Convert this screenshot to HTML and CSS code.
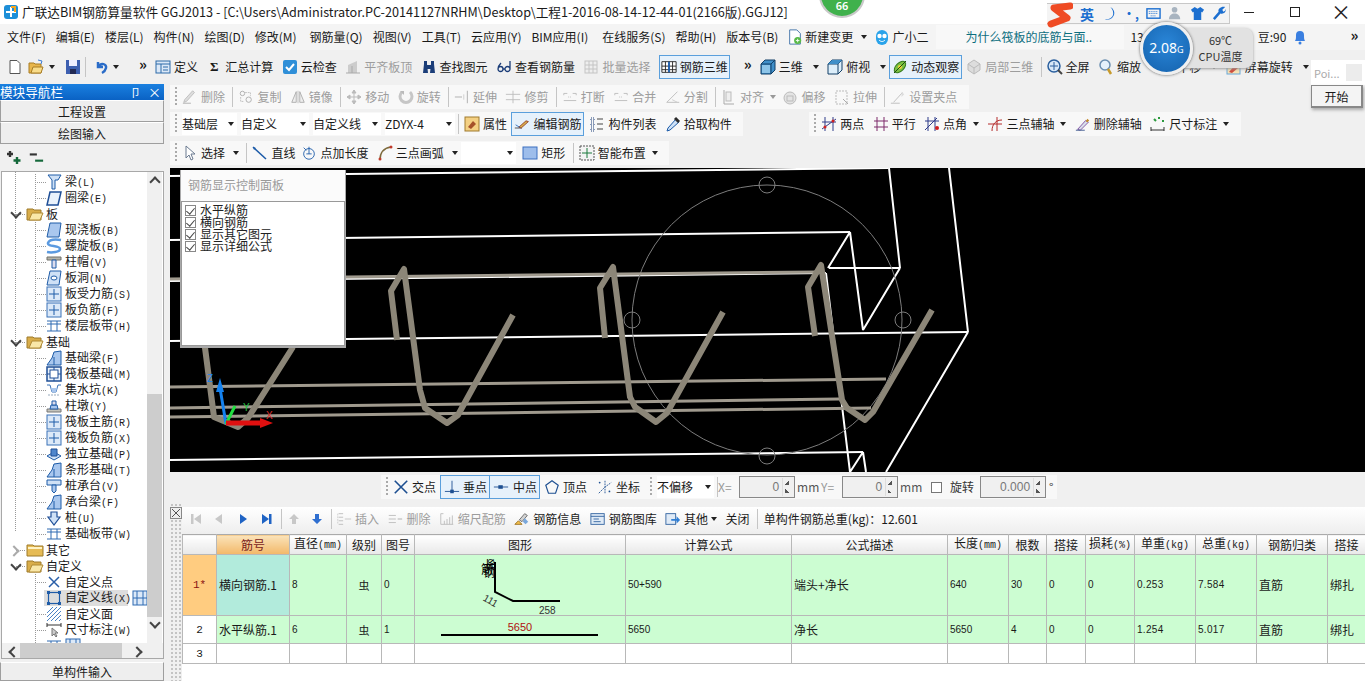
FILE: index.html
```html
<!DOCTYPE html>
<html lang="zh">
<head>
<meta charset="utf-8">
<title>广联达BIM钢筋算量软件 GGJ2013</title>
<link rel="stylesheet" href="styles.css">
</head>
<body>
<svg class="sprite" width="0" height="0">
<defs>
<symbol id="logo" viewBox="0 0 16 16"><rect x="1" y="1" width="14" height="14" rx="3" fill="#1d8fd8"/><path d="M8 3v10M3 8h10" stroke="#fff" stroke-width="2"/><path d="M8 3h4v5" fill="none" stroke="#f5a623" stroke-width="2"/></symbol>
<symbol id="new" viewBox="0 0 16 16"><path d="M3 1.500h7l3 3v10H3z" fill="#fff" stroke="#555"/></symbol>
<symbol id="open" viewBox="0 0 16 16"><path d="M1 4h5l1 1h6v9H1z" fill="#e8b64c" stroke="#a87d25"/><path d="M3 14l2-6h10l-2 6z" fill="#f8dc8a" stroke="#a87d25"/><path d="M10 1l4 1-1 3" fill="none" stroke="#3a7bd5"/></symbol>
<symbol id="save" viewBox="0 0 16 16"><rect x="1" y="1" width="14" height="14" fill="#3d5fb0"/><rect x="4" y="1" width="8" height="6" fill="#eef"/><rect x="5" y="10" width="6" height="5" fill="#222a55"/></symbol>
<symbol id="undo" viewBox="0 0 16 16"><path d="M4 3v5h5M4 8c3-5 9-3 8 1-.5 2-2 4-4 5" fill="none" stroke="#2a6cc8" stroke-width="2.500"/></symbol>
<symbol id="def" viewBox="0 0 16 16"><rect x="1" y="2" width="14" height="12" fill="#dbe8f7" stroke="#2c6aa8"/><path d="M1 5h14M6 5v9M8 8h5M8 11h5" stroke="#2c6aa8"/></symbol>
<symbol id="cloud" viewBox="0 0 16 16"><rect x="1" y="1" width="14" height="14" rx="2" fill="#2f8fd8"/><path d="M4 8l3 3 5-6" fill="none" stroke="#fff" stroke-width="2"/></symbol>
<symbol id="flat" viewBox="0 0 16 16"><path d="M3 14V6l9-4v12z" fill="#ccc"/><path d="M1 14h14M7 7v7" stroke="#aaa"/></symbol>
<symbol id="binoc" viewBox="0 0 16 16"><path d="M2 14l1-9h3l1 9zM9 14l1-9h3l1 9zM6 6h4v4H6zM3 2h3v3H3zM10 2h3v3h-3z" fill="#1b3d78"/></symbol>
<symbol id="glass" viewBox="0 0 16 16"><path d="M2 10c0-3 2-5 3-6M2 10a2.500 2.500 0 1 0 5 0 2.500 2.500 0 1 0-5 0M9 10a2.500 2.500 0 1 0 5 0 2.500 2.500 0 1 0-5 0M14 10V2M7 10h2" fill="none" stroke="#1b3d78" stroke-width="1.300"/></symbol>
<symbol id="batch" viewBox="0 0 16 16"><rect x="2" y="2" width="12" height="12" fill="#eee" stroke="#c4c4c4"/><path d="M2 6h12M2 10h12M6 2v12M10 2v12" stroke="#c4c4c4"/></symbol>
<symbol id="g3d" viewBox="0 0 18 16"><path d="M1 2h16v12H1zM5 2v12M9 2v12M13 2v12M1 7h16M1 11h16" fill="#fff" stroke="#222"/><path d="M9 2v12" stroke="#1a5fb4" stroke-width="2"/></symbol>
<symbol id="cube" viewBox="0 0 16 16"><path d="M1 5l4-4h10v10l-4 4H1z" fill="#3f8fc9" stroke="#123f66"/><path d="M1 5h10v10M11 5l4-4" fill="none" stroke="#123f66"/><path d="M2 6h8v8H2z" fill="#8cc4e8"/></symbol>
<symbol id="cube2" viewBox="0 0 16 16"><path d="M1 5l4-4h10v10l-4 4H1z" fill="#dceefa" stroke="#123f66"/><path d="M1 5h10v10M11 5l4-4" fill="none" stroke="#123f66"/><path d="M1 5l4-4h10l-4 4z" fill="#3f8fc9"/></symbol>
<symbol id="orbit" viewBox="0 0 16 16"><ellipse cx="8" cy="8" rx="7" ry="4" fill="#7cc242" stroke="#357a1c" transform="rotate(-45 8 8)"/><circle cx="8" cy="8" r="2" fill="#f2d13c"/><path d="M2 14L14 2" stroke="#1e4d12"/></symbol>
<symbol id="gcube" viewBox="0 0 16 16"><path d="M8 1l6 4v6l-6 4-6-4V5z" fill="#ddd" stroke="#bbb"/><path d="M2 5l6 4 6-4M8 9v6" stroke="#bbb" fill="none"/></symbol>
<symbol id="full" viewBox="0 0 16 16"><circle cx="7" cy="7" r="6" fill="#d8e8f8" stroke="#2a5f9e" stroke-width="1.500"/><path d="M7 3v8M3 7h8" stroke="#2a5f9e"/><path d="M11 11l4 4" stroke="#444" stroke-width="2"/></symbol>
<symbol id="zoomi" viewBox="0 0 16 16"><circle cx="7" cy="6" r="5" fill="#e6f2fb" stroke="#6b8fb0" stroke-width="1.500"/><path d="M10 10l3 5" stroke="#c79a2c" stroke-width="2.500"/></symbol>
<symbol id="rot" viewBox="0 0 16 16"><rect x="1" y="3" width="13" height="12" fill="#f7e2b4" stroke="#69a7d8"/><path d="M3 13l6-7 3 3-6 5z" fill="#d04a3a"/></symbol>
<symbol id="note" viewBox="0 0 16 18"><path d="M2 1h8l4 4v12H2z" fill="#fff" stroke="#3a6ea5"/><circle cx="11" cy="13" r="4" fill="#58b948"/><path d="M9 13h4M11 11v4" stroke="#fff"/></symbol>
<symbol id="bot" viewBox="0 0 16 16"><path d="M2 7a6 6 0 0 1 12 0v3a6 6 0 0 1-12 0z" fill="#29a3ea"/><circle cx="5.500" cy="7" r="2.200" fill="#fff"/><circle cx="10.500" cy="7" r="2.200" fill="#fff"/><path d="M5 11c2 2 4 2 6 0" stroke="#fff" fill="none"/></symbol>
<symbol id="bell" viewBox="0 0 16 16"><path d="M3 12c1-2 1-3 1-6a4 4 0 0 1 8 0c0 3 0 4 1 6z" fill="#3a7fe0"/><circle cx="8" cy="14" r="1.500" fill="#3a7fe0"/></symbol>
<symbol id="del" viewBox="0 0 18 16"><path d="M2 14l3-1 9-10-2-2-9 10z" fill="#ddd" stroke="#bbb"/><path d="M1 15h9" stroke="#aaa"/></symbol>
<symbol id="copy" viewBox="0 0 18 16"><circle cx="5" cy="4" r="2.500" fill="none" stroke="#aaa"/><circle cx="12" cy="11" r="3" fill="none" stroke="#aaa"/><path d="M8 3h6M14 3v4M3 8v5h4" fill="none" stroke="#bbb" stroke-dasharray="2 1"/></symbol>
<symbol id="mirror" viewBox="0 0 18 16"><path d="M2 14L7 2v12zM16 14L11 2v12z" fill="#eee" stroke="#aaa"/><path d="M9 1v14" stroke="#bbb"/></symbol>
<symbol id="move" viewBox="0 0 16 16"><path d="M8 1v14M1 8h14M8 1l-2 3h4zM8 15l-2-3h4zM1 8l3-2v4zM15 8l-3-2v4z" fill="#bbb" stroke="#bbb"/></symbol>
<symbol id="rotg" viewBox="0 0 16 16"><path d="M4 3a6 6 0 1 0 8 0" fill="none" stroke="#c6c6c6" stroke-width="3"/><path d="M2 2h4v4" fill="#bbb"/></symbol>
<symbol id="ext" viewBox="0 0 18 16"><path d="M15 1v14M1 8h8" stroke="#aaa"/><path d="M11 5v6" stroke="#ccc"/></symbol>
<symbol id="trim" viewBox="0 0 18 16"><path d="M9 1v14M1 5h16M1 11h16" stroke="#bbb"/></symbol>
<symbol id="brk" viewBox="0 0 18 16"><path d="M2 4h4M12 4h4M2 12h14M2 4v2M16 4v2" stroke="#bbb" fill="none"/><path d="M7 8h4" stroke="#bbb" stroke-dasharray="1 1"/></symbol>
<symbol id="cut" viewBox="0 0 18 16"><path d="M2 14L14 2M2 14h14" stroke="#bbb" fill="none"/><path d="M8 11l6 3" stroke="#ccc"/></symbol>
<symbol id="align" viewBox="0 0 16 16"><path d="M3 1v14h10" stroke="#aaa" fill="none"/><rect x="5" y="3" width="5" height="9" fill="#eee" stroke="#bbb"/></symbol>
<symbol id="off" viewBox="0 0 16 16"><circle cx="8" cy="9" r="6" fill="#e4e4e4" stroke="#bbb"/><rect x="5" y="7" width="6" height="5" fill="none" stroke="#bbb"/></symbol>
<symbol id="str" viewBox="0 0 16 16"><rect x="2" y="2" width="11" height="13" fill="none" stroke="#bbb" stroke-dasharray="2 1"/><path d="M9 10l5 5" stroke="#aaa"/></symbol>
<symbol id="gripi" viewBox="0 0 18 16"><path d="M4 14L14 3M1 15h10" stroke="#bbb"/><path d="M13 2l3 3-3 3" fill="#ddd"/></symbol>
<symbol id="prop" viewBox="0 0 16 16"><rect x="1" y="1" width="14" height="14" fill="#f4d083" stroke="#9f7a2c"/><path d="M4 11l5-6 3 3-5 5z" fill="#a5512a"/></symbol>
<symbol id="edit" viewBox="0 0 20 16"><path d="M1 13h9" stroke="#333"/><path d="M6 12l9-8 3 1-9 8z" fill="#d8b04c" stroke="#8a2e1c"/><path d="M2 9l5 3" stroke="#1b60b5"/></symbol>
<symbol id="list" viewBox="0 0 16 16"><path d="M2 2h3v3H2zM2 7h3v3H2zM2 12h3v3H2z" fill="none" stroke="#1b3d78" stroke-dasharray="1 1"/><path d="M8 3h6M8 8h6M8 13h6" stroke="#444"/></symbol>
<symbol id="pick" viewBox="0 0 16 16"><path d="M2 15l1-3 8-9 3 3-9 8z" fill="#cfe2f7" stroke="#1b5aa8"/><path d="M10 2l4 4" stroke="#2b2b2b" stroke-width="3"/></symbol>
<symbol id="two" viewBox="0 0 16 16"><path d="M4 1v14M12 1v14M1 6h14M1 13L15 3" stroke="#2f3c8a"/><circle cx="4" cy="11" r="1.500" fill="#d02020"/><circle cx="12" cy="5" r="1.500" fill="#d02020"/></symbol>
<symbol id="par" viewBox="0 0 16 16"><path d="M4 1v14M11 1v14M1 5h14M1 11h14" stroke="#7d2a6a"/></symbol>
<symbol id="ang" viewBox="0 0 16 16"><path d="M4 1v14M11 1v14M1 5h14M1 14L13 2" stroke="#2f3c8a"/><circle cx="13" cy="12" r="2" fill="#d02020"/></symbol>
<symbol id="arcx" viewBox="0 0 16 16"><path d="M5 15c0-7 4-11 10-11M1 8h14M10 1v14" fill="none" stroke="#b42a2a"/></symbol>
<symbol id="delx" viewBox="0 0 18 16"><path d="M3 14l9-10 3 2-9 9z" fill="#d8dfea" stroke="#7b4a9e"/><path d="M12 5l2-3 2 2-2 2" fill="#c08a2c"/><path d="M1 15h10" stroke="#36528a"/></symbol>
<symbol id="dim" viewBox="0 0 16 16"><path d="M1 11v4M14 11v4M1 14h13" stroke="#333"/><path d="M4 3l2 2M8 2h2M13 4v2" stroke="#2c9a3e" stroke-width="2"/></symbol>
<symbol id="cur" viewBox="0 0 16 16"><path d="M4 1v12l3-3 2 5 2-1-2-5h4z" fill="#fff" stroke="#6b7a90"/></symbol>
<symbol id="lin" viewBox="0 0 16 16"><path d="M1 2l13 12" stroke="#1b5aa8" stroke-width="1.500"/><path d="M1 2l3 1-2 2z" fill="#1b5aa8"/></symbol>
<symbol id="ptl" viewBox="0 0 18 16"><circle cx="9" cy="9" r="6" fill="none" stroke="#1b5aa8"/><path d="M9 1v8M6 9h6M3 2l3 3" stroke="#1b5aa8"/></symbol>
<symbol id="arc" viewBox="0 0 16 16"><path d="M3 15C3 7 7 3 14 2" fill="none" stroke="#7d6a3c" stroke-width="1.500"/><circle cx="3" cy="14" r="1.500" fill="#c03a2a"/><circle cx="14" cy="2" r="1.500" fill="#c03a2a"/></symbol>
<symbol id="rect" viewBox="0 0 16 16"><rect x="1" y="2" width="14" height="12" fill="#9dbdeb" stroke="#3a6ec0"/></symbol>
<symbol id="smart" viewBox="0 0 16 16"><rect x="1" y="1" width="14" height="14" fill="#f4f4f4" stroke="#555" stroke-dasharray="2 1"/><path d="M8 3v10M3 8h10" stroke="#1b7a3c"/></symbol>
<symbol id="snx" viewBox="0 0 18 18"><path d="M2 2l14 14M16 2L2 16" stroke="#1d4f91" stroke-width="1.800"/></symbol>
<symbol id="snp" viewBox="0 0 18 18"><path d="M9 2v12M1 14h16" stroke="#1d4f91"/><rect x="7" y="12" width="4" height="4" fill="#1d4f91"/></symbol>
<symbol id="snm" viewBox="0 0 18 18"><path d="M1 9h16" stroke="#1d4f91"/><rect x="6" y="7" width="5" height="4" fill="#1d4f91"/></symbol>
<symbol id="snv" viewBox="0 0 18 18"><path d="M9 2l7 5-3 9H5L2 7z" fill="none" stroke="#1d4f91" stroke-width="1.300"/></symbol>
<symbol id="sno" viewBox="0 0 18 18"><path d="M9 2v14M2 16L9 9l7-5" stroke="#1d4f91" stroke-dasharray="2 1" fill="none"/><circle cx="3" cy="4" r="1" fill="#1d4f91"/><circle cx="14" cy="14" r="1" fill="#1d4f91"/></symbol>
<symbol id="tri" viewBox="0 0 16 16"><path d="M5 3l7 5-7 5z" fill="#1f63c4"/></symbol>
<symbol id="triend" viewBox="0 0 16 16"><path d="M3 3l7 5-7 5z" fill="#1f63c4"/><rect x="10" y="3" width="2.500" height="10" fill="#1f63c4"/></symbol>
<symbol id="gstart" viewBox="0 0 16 16"><rect x="3" y="3" width="2.500" height="10" fill="#c8c8c8"/><path d="M13 3L6 8l7 5z" fill="#c8c8c8"/></symbol>
<symbol id="gprev" viewBox="0 0 16 16"><path d="M11 3L4 8l7 5z" fill="#c8c8c8"/></symbol>
<symbol id="gup" viewBox="0 0 16 16"><path d="M8 3l5 5H10v5H6V8H3z" fill="#c8c8c8"/></symbol>
<symbol id="bdown" viewBox="0 0 16 16"><path d="M8 13L3 8h3V3h4v5h3z" fill="#2f6fd0"/></symbol>
<symbol id="ins" viewBox="0 0 18 16"><path d="M3 2h5M3 6h5M3 10h5M3 14h5" stroke="#bbb"/><path d="M10 8h7" stroke="#c4c4c4"/><path d="M2 2v12" stroke="#ccc" stroke-dasharray="2 1"/></symbol>
<symbol id="rdel" viewBox="0 0 18 16"><path d="M2 4h8M2 8h8M2 12h8" stroke="#bbb"/><path d="M12 8h5" stroke="#aaa"/></symbol>
<symbol id="scale" viewBox="0 0 18 16"><path d="M2 14V2h3M6 14v-4M9 14v-6M12 14v-8M15 14V4M2 14h14" stroke="#bbb" fill="none"/></symbol>
<symbol id="info" viewBox="0 0 18 16"><path d="M1 14l4-4 4 4z" fill="#f4c14e" stroke="#9c6f1c"/><path d="M6 9l6-7 3 2-6 7z" fill="#d2d2d2" stroke="#666"/><path d="M12 7l4 4-3 3-3-3z" fill="#7aa8dc"/></symbol>
<symbol id="lib" viewBox="0 0 18 16"><rect x="1" y="2" width="15" height="12" fill="#dfeaf6" stroke="#30629f"/><path d="M1 5h15M4 8h6M4 11h8" stroke="#30629f"/></symbol>
<symbol id="oth" viewBox="0 0 18 16"><rect x="1" y="2" width="11" height="12" fill="#dfeaf6" stroke="#30629f"/><path d="M7 8h6V5l4 4-4 4v-3H7z" fill="#2f7fd6"/></symbol>
<symbol id="folder" viewBox="0 0 18 14"><path d="M1 2h6l1 1h9v10H1z" fill="#e6bb55" stroke="#9e7a2a"/><path d="M2 4h14v2H2z" fill="#fff3c4"/></symbol>
<symbol id="folderopen" viewBox="0 0 18 14"><path d="M1 2h6l1 1h7v10H1z" fill="#d9ad4a" stroke="#9e7a2a"/><path d="M3 13l3-7h11l-3 7z" fill="#f9e7a8" stroke="#b08a35"/></symbol>
<symbol id="expand" viewBox="0 0 16 16"><path d="M4 1v6M1 4h6" stroke="#333" stroke-width="2.400"/><path d="M11 7v7M7.500 10.500h7" stroke="#14683a" stroke-width="2.400"/></symbol>
<symbol id="collapse" viewBox="0 0 18 16"><path d="M2 4h8" stroke="#333" stroke-width="2.400"/><path d="M8 11h9" stroke="#14683a" stroke-width="2.400"/></symbol>
<symbol id="t-beam" viewBox="0 0 16 16"><path d="M2 1h13l-3 5H9v9H6V6z" fill="#cfe1f6" stroke="#1f5ca8"/></symbol>
<symbol id="t-ring" viewBox="0 0 16 16"><path d="M4 2h11l-3 13H1z" fill="#eaf2fb" stroke="#1f4f97" stroke-width="1.500"/></symbol>
<symbol id="t-slab" viewBox="0 0 16 16"><path d="M4 1h11l-2 14H1z" fill="#a9c7ee" stroke="#1f5ca8"/></symbol>
<symbol id="t-spiral" viewBox="0 0 16 16"><path d="M15 2C8 1 3 2 2 5c-1 4 12 2 12 6 0 3-8 4-13 3" fill="none" stroke="#5b9ae0" stroke-width="2.500"/></symbol>
<symbol id="t-cap" viewBox="0 0 16 16"><path d="M1 3h14v3H1z" fill="#b4b4aa" stroke="#70706a"/><path d="M6 6h4v8H6z" fill="#dde" stroke="#1f5ca8"/></symbol>
<symbol id="t-hole" viewBox="0 0 16 16"><path d="M4 1h11l-2 14H1z" fill="#cfe1f6" stroke="#1f5ca8"/><ellipse cx="8" cy="8" rx="3" ry="2" fill="#fff" stroke="#1f5ca8"/></symbol>
<symbol id="t-bar" viewBox="0 0 16 16"><rect x="1" y="1" width="14" height="14" fill="#dce9f8" stroke="#3a72b8"/><path d="M8 3v10M3 8h10" stroke="#1f5ca8"/></symbol>
<symbol id="t-band" viewBox="0 0 16 16"><path d="M1 3h14M1 13h14M5 3v10M11 3v10M1 6h14" stroke="#2f6bb2"/></symbol>
<symbol id="t-fb" viewBox="0 0 16 16"><path d="M1 15l5-7 2-6 7-1v14z" fill="#a9c7ee" stroke="#1f5ca8"/><path d="M8 7v8" stroke="#1f5ca8"/></symbol>
<symbol id="t-raft" viewBox="0 0 16 16"><rect x="1" y="1" width="14" height="14" fill="#eaf2fb" stroke="#1f4f97" stroke-width="1.500"/><rect x="4" y="4" width="8" height="8" fill="#fff" stroke="#1f4f97"/><path d="M1 8h3M12 8h3M8 1v3M8 12v3" stroke="#1f4f97"/></symbol>
<symbol id="t-pit" viewBox="0 0 16 16"><path d="M1 3h3l2 7h4l2-7h3" fill="none" stroke="#3a72b8"/><path d="M5 6h6l-1 4H6z" fill="#a9c7ee"/><path d="M2 13h12" stroke="#9ab" stroke-dasharray="2 1"/></symbol>
<symbol id="t-pier" viewBox="0 0 16 16"><path d="M1 11h14v3H1z" fill="#c4c4bc" stroke="#777"/><path d="M5 7h6l1 4H4z" fill="#a9c7ee" stroke="#1f5ca8"/><path d="M6 3h4v4H6z" fill="#dde" stroke="#1f5ca8"/></symbol>
<symbol id="t-ind" viewBox="0 0 16 16"><path d="M1 10l7-4 7 4-7 4z" fill="#cfe1f6" stroke="#1f5ca8"/><path d="M5 3h6v7H5z" fill="#4f86cc" stroke="#1f4f97"/></symbol>
<symbol id="t-pcap" viewBox="0 0 16 16"><path d="M1 2h14v5H1z" fill="#cfe1f6" stroke="#1f5ca8"/><path d="M6 7h4v6l-2 2-2-2z" fill="#a9c7ee" stroke="#1f5ca8"/></symbol>
<symbol id="t-pile" viewBox="0 0 16 16"><path d="M5 2h6v5h3l-6 8-6-8h3z" fill="#cfe1f6" stroke="#1f4f97" stroke-width="1.200"/></symbol>
<symbol id="t-x" viewBox="0 0 16 16"><path d="M3 3l10 10M13 3L3 13" stroke="#2a5fa8" stroke-width="1.500"/></symbol>
<symbol id="t-line" viewBox="0 0 16 16"><rect x="2.500" y="2.500" width="11" height="11" fill="none" stroke="#1f5ca8" stroke-width="1.200"/><path d="M1 1h3v3H1zM12 1h3v3h-3zM1 12h3v3H1zM12 12h3v3h-3z" fill="#1f5ca8"/></symbol>
<symbol id="t-face" viewBox="0 0 16 16"><path d="M1 7l6-6M1 11L11 1M1 15L15 1M5 15L15 5M9 15l6-6M13 15l2-2" stroke="#4a82c4"/></symbol>
<symbol id="t-dim" viewBox="0 0 16 16"><path d="M1 1v4M15 1v4M1 3h14" stroke="#333"/><path d="M6 6v8l2-2 2 3 1-1-2-3h3z" fill="#ccc" stroke="#777"/></symbol>
<symbol id="t-col" viewBox="0 0 16 16"><rect x="1" y="1" width="14" height="14" fill="#dce9f8" stroke="#2f6bb2"/><path d="M5 1v14M11 1v14M1 8h14" stroke="#2f6bb2"/></symbol>
<symbol id="gx" viewBox="0 0 12 12"><rect x=".5" y=".5" width="11" height="11" fill="#eee" stroke="#888"/><path d="M2 2l8 8M10 2l-8 8" stroke="#555"/></symbol>
<symbol id="sogou" viewBox="0 0 26 28"><path d="M23 5L7 7 20 17 4 23" fill="none" stroke="#ef4b24" stroke-width="7" stroke-linejoin="round" stroke-linecap="round"/></symbol>
<symbol id="moon" viewBox="0 0 16 16"><path d="M10 1a7 7 0 0 1-6 13c5 1 9-2 9-6 0-3-1-5-3-7z" fill="#1c6fd0"/></symbol>
<symbol id="kbd" viewBox="0 0 16 16"><rect x="1" y="3" width="14" height="10" fill="none" stroke="#1c6fd0" stroke-width="1.500"/><path d="M3 6h10M3 8h10M5 10.500h6" stroke="#1c6fd0" stroke-dasharray="1 1"/></symbol>
<symbol id="user" viewBox="0 0 16 16"><circle cx="7" cy="4" r="3" fill="#a8b4c0"/><path d="M1 14c0-4 3-6 6-6s6 2 6 6z" fill="#a8b4c0"/></symbol>
<symbol id="shirt" viewBox="0 0 16 16"><path d="M5 1L1 4l2 3 1-1v9h8V6l1 1 2-3-4-3-3 2z" fill="#1c6fd0"/></symbol>
<symbol id="wrench" viewBox="0 0 16 16"><path d="M14 1l-3 3 1 2 2-1 1-2c0 4-3 6-6 5l-6 7-2-2 6-7c-1-3 3-6 7-5z" fill="#1c6fd0"/></symbol>
</defs>
</svg>

<div class="app">
  <header class="titlebar">
    <svg class="ic logo"><use href="#logo"/></svg>
    <span class="title">广联达BIM钢筋算量软件 GGJ2013 - [C:\Users\Administrator.PC-20141127NRHM\Desktop\工程1-2016-08-14-12-44-01(2166版).GGJ12]</span>
    <div class="winctl">
      <span class="wmin"></span><span class="wres"></span><span class="wcls">×</span>
    </div>
  </header>

  <nav class="menubar">
    <span>文件(F)</span><span>编辑(E)</span><span>楼层(L)</span><span>构件(N)</span><span>绘图(D)</span><span>修改(M)</span><span class="m3">钢筋量(Q)</span><span>视图(V)</span><span>工具(T)</span><span>云应用(Y)</span><span>BIM应用(I)</span><span class="m5">在线服务(S)</span><span>帮助(H)</span><span>版本号(B)</span>
    <span class="mi mi1"><svg class="ic"><use href="#note"/></svg>新建变更<b class="ar"></b></span>
    <span class="mi mi2"><svg class="ic"><use href="#bot"/></svg>广小二</span>
    <span class="ask">为什么筏板的底筋与面..</span>
    <span class="tail">13</span>
    <span class="bean">豆:90</span>
    <svg class="ic bell"><use href="#bell"/></svg>
    <span class="more">»</span>
  </nav>

  <div class="tb tb1">
    <svg class="ic"><use href="#new"/></svg>
    <svg class="ic ml5"><use href="#open"/></svg><b class="ar a1"></b>
    <svg class="ic"><use href="#save"/></svg>
    <i class="sp sp1"></i>
    <svg class="ic"><use href="#undo"/></svg><b class="ar a3"></b>
    <span class="chev">»</span>
    <span class="it"><svg class="ic"><use href="#def"/></svg>定义</span>
    <span class="it"><span class="sigma">Σ</span>汇总计算</span>
    <span class="it"><svg class="ic"><use href="#cloud"/></svg>云检查</span>
    <span class="it off"><svg class="ic"><use href="#flat"/></svg>平齐板顶</span>
    <span class="it"><svg class="ic"><use href="#binoc"/></svg>查找图元</span>
    <span class="it"><svg class="ic"><use href="#glass"/></svg>查看钢筋量</span>
    <span class="it off"><svg class="ic"><use href="#batch"/></svg>批量选择</span>
    <span class="it box b3d"><svg class="ic"><use href="#g3d"/></svg>钢筋三维</span>
    <span class="chev chev2">»</span>
    <span class="it"><svg class="ic"><use href="#cube"/></svg>三维<b class="ar a2"></b></span>
    <span class="it mr3"><svg class="ic"><use href="#cube2"/></svg>俯视<b class="ar a2"></b></span>
    <span class="it box orb"><svg class="ic"><use href="#orbit"/></svg>动态观察</span>
    <span class="it off"><svg class="ic"><use href="#gcube"/></svg>局部三维</span>
    <i class="sp"></i>
    <span class="it"><svg class="ic"><use href="#full"/></svg>全屏</span>
    <span class="it"><svg class="ic"><use href="#zoomi"/></svg>缩放<b class="ar a2"></b></span>
    <span class="it pan">平移<b class="ar a2"></b></span>
    <span class="it"><svg class="ic"><use href="#rot"/></svg>屏幕旋转<b class="ar a2"></b></span>
  </div>

  <div class="work">
    <aside class="side">
      <div class="sidehead"><span>模块导航栏</span><span class="pin">卩</span><span class="cl">×</span></div>
      <div class="sbtn">工程设置</div>
      <div class="sbtn">绘图输入</div>
      <div class="treetools"><svg class="ic"><use href="#expand"/></svg><svg class="ic"><use href="#collapse"/></svg></div>
      <div class="treepane">
        <div class="treemain">
          <div class="tree">
            <div class="tr ch"><svg class="ic"><use href="#t-beam"/></svg><span>梁<i>(L)</i></span></div>
            <div class="tr ch"><svg class="ic"><use href="#t-ring"/></svg><span>圈梁<i>(E)</i></span></div>
            <div class="tr fd"><span class="exp"></span><svg class="fo"><use href="#folderopen"/></svg><span>板</span></div>
            <div class="tr ch"><svg class="ic"><use href="#t-slab"/></svg><span>现浇板<i>(B)</i></span></div>
            <div class="tr ch"><svg class="ic"><use href="#t-spiral"/></svg><span>螺旋板<i>(B)</i></span></div>
            <div class="tr ch"><svg class="ic"><use href="#t-cap"/></svg><span>柱帽<i>(V)</i></span></div>
            <div class="tr ch"><svg class="ic"><use href="#t-hole"/></svg><span>板洞<i>(N)</i></span></div>
            <div class="tr ch"><svg class="ic"><use href="#t-bar"/></svg><span>板受力筋<i>(S)</i></span></div>
            <div class="tr ch"><svg class="ic"><use href="#t-bar"/></svg><span>板负筋<i>(F)</i></span></div>
            <div class="tr ch"><svg class="ic"><use href="#t-band"/></svg><span>楼层板带<i>(H)</i></span></div>
            <div class="tr fd"><span class="exp"></span><svg class="fo"><use href="#folderopen"/></svg><span>基础</span></div>
            <div class="tr ch"><svg class="ic"><use href="#t-fb"/></svg><span>基础梁<i>(F)</i></span></div>
            <div class="tr ch"><svg class="ic"><use href="#t-raft"/></svg><span>筏板基础<i>(M)</i></span></div>
            <div class="tr ch"><svg class="ic"><use href="#t-pit"/></svg><span>集水坑<i>(K)</i></span></div>
            <div class="tr ch"><svg class="ic"><use href="#t-pier"/></svg><span>柱墩<i>(Y)</i></span></div>
            <div class="tr ch"><svg class="ic"><use href="#t-bar"/></svg><span>筏板主筋<i>(R)</i></span></div>
            <div class="tr ch"><svg class="ic"><use href="#t-bar"/></svg><span>筏板负筋<i>(X)</i></span></div>
            <div class="tr ch"><svg class="ic"><use href="#t-ind"/></svg><span>独立基础<i>(P)</i></span></div>
            <div class="tr ch"><svg class="ic"><use href="#t-fb"/></svg><span>条形基础<i>(T)</i></span></div>
            <div class="tr ch"><svg class="ic"><use href="#t-pcap"/></svg><span>桩承台<i>(V)</i></span></div>
            <div class="tr ch"><svg class="ic"><use href="#t-fb"/></svg><span>承台梁<i>(F)</i></span></div>
            <div class="tr ch"><svg class="ic"><use href="#t-pile"/></svg><span>桩<i>(U)</i></span></div>
            <div class="tr ch"><svg class="ic"><use href="#t-band"/></svg><span>基础板带<i>(W)</i></span></div>
            <div class="tr fd"><span class="exp rt"></span><svg class="fo"><use href="#folder"/></svg><span>其它</span></div>
            <div class="tr fd"><span class="exp"></span><svg class="fo"><use href="#folderopen"/></svg><span>自定义</span></div>
            <div class="tr ch"><svg class="ic"><use href="#t-x"/></svg><span>自定义点</span></div>
            <div class="tr ch chosen"><svg class="ic"><use href="#t-line"/></svg><span>自定义线<i>(X)</i></span><svg class="ic cols"><use href="#t-col"/></svg></div>
            <div class="tr ch"><svg class="ic"><use href="#t-face"/></svg><span>自定义面</span></div>
            <div class="tr ch"><svg class="ic"><use href="#t-dim"/></svg><span>尺寸标注<i>(W)</i></span></div>
            <div class="tr ch"><svg class="ic"><use href="#t-band"/></svg><svg class="ic"><use href="#t-col"/></svg></div>
          </div>
          <div class="vscroll"><span class="up"></span><span class="thumb"></span><span class="dn"></span></div>
        </div>
        <div class="hscroll"><span class="lf"></span><span class="hthumb"></span><span class="rg"></span></div>
      </div>
      <div class="sbtn last">单构件输入</div>
    </aside>

    <main class="main">
      <div class="row r2">
        <div class="tbar off">
          <i class="gr"></i>
          <span class="it"><svg class="ic"><use href="#del"/></svg>删除</span><i class="sp"></i>
          <span class="it"><svg class="ic"><use href="#copy"/></svg>复制</span>
          <span class="it"><svg class="ic"><use href="#mirror"/></svg>镜像</span><i class="sp"></i>
          <span class="it"><svg class="ic"><use href="#move"/></svg>移动</span>
          <span class="it"><svg class="ic"><use href="#rotg"/></svg>旋转</span><i class="sp"></i>
          <span class="it"><svg class="ic"><use href="#ext"/></svg>延伸</span>
          <span class="it"><svg class="ic"><use href="#trim"/></svg>修剪</span><i class="sp"></i>
          <span class="it"><svg class="ic"><use href="#brk"/></svg>打断</span>
          <span class="it"><svg class="ic"><use href="#brk"/></svg>合并</span>
          <span class="it"><svg class="ic"><use href="#cut"/></svg>分割</span><i class="sp"></i>
          <span class="it"><svg class="ic"><use href="#align"/></svg>对齐<b class="ar ag"></b></span>
          <span class="it"><svg class="ic"><use href="#off"/></svg>偏移</span>
          <span class="it"><svg class="ic"><use href="#str"/></svg>拉伸</span><i class="sp"></i>
          <span class="it"><svg class="ic"><use href="#gripi"/></svg>设置夹点</span>
        </div>
      </div>

      <div class="row r3">
        <div class="tbar">
          <i class="gr"></i>
          <span class="sel s1">基础层<b class="ar"></b></span>
          <span class="sel s2">自定义<b class="ar"></b></span>
          <span class="sel s3">自定义线<b class="ar"></b></span>
          <span class="sel s4">ZDYX-4<b class="ar"></b></span>
          <i class="sp"></i>
          <span class="it"><svg class="ic"><use href="#prop"/></svg>属性</span>
          <span class="it box ebx"><svg class="ic"><use href="#edit"/></svg>编辑钢筋</span>
          <span class="it"><svg class="ic"><use href="#list"/></svg>构件列表</span>
          <span class="it"><svg class="ic"><use href="#pick"/></svg>拾取构件</span>
        </div>
        <div class="tbar t-right">
          <i class="gr"></i>
          <span class="it"><svg class="ic"><use href="#two"/></svg>两点</span>
          <span class="it"><svg class="ic"><use href="#par"/></svg>平行</span>
          <span class="it"><svg class="ic"><use href="#ang"/></svg>点角<b class="ar a4"></b></span>
          <span class="it"><svg class="ic"><use href="#arcx"/></svg>三点辅轴<b class="ar a4"></b></span>
          <span class="it"><svg class="ic"><use href="#delx"/></svg>删除辅轴</span>
          <span class="it"><svg class="ic"><use href="#dim"/></svg>尺寸标注<b class="ar a4"></b></span>
        </div>
      </div>

      <div class="row r4">
        <div class="tbar">
          <i class="gr"></i>
          <span class="it"><svg class="ic"><use href="#cur"/></svg>选择<b class="ar a4"></b></span><i class="sp"></i>
          <span class="it mr6"><svg class="ic"><use href="#lin"/></svg>直线</span>
          <span class="it"><svg class="ic"><use href="#ptl"/></svg>点加长度</span>
          <span class="it"><svg class="ic"><use href="#arc"/></svg>三点画弧<b class="ar a4"></b></span>
          <span class="sel s5"><b class="ar"></b></span>
          <span class="it"><svg class="ic"><use href="#rect"/></svg>矩形</span><i class="sp"></i>
          <span class="it"><svg class="ic"><use href="#smart"/></svg>智能布置<b class="ar a5"></b></span>
        </div>
      </div>

      <div class="canvas">
        <svg class="scene" viewBox="170 168 1195 304" width="1195" height="304">
          <g class="wire">
            <path d="M170 176L888 168"/>
            <path d="M170 240L850 232"/>
            <path d="M170 281L826 273"/>
            <path d="M829 268L900 268"/>
            <path d="M170 341L968 332"/>
            <path d="M170 460L863 452"/>
            <path d="M850 232L828 268M850 232L863 330M900 268L863 330M889 168L900 268M949 168L968 332M968 332L886 472M826 273L850 472M863 452L850 472M863 452L866 472"/>
          </g>
          <g class="gridc">
            <circle cx="767" cy="320" r="135"/>
            <circle cx="767" cy="185" r="8"/>
            <circle cx="632" cy="320" r="8"/>
            <circle cx="903" cy="320" r="8"/>
            <circle cx="767" cy="456" r="8"/>
          </g>
          <g class="long">
            <path d="M170 279L818 272"/>
            <path d="M170 387L886 379"/>
            <path d="M170 408L839 399"/>
            <path d="M170 417L871 408"/>
          </g>
          <g class="hoop">
            <path d="M204 340L214 417L238 427L248 418L293 347"/>
            <path d="M397 340L391 291L404 269L420 390L425 408L447 423L458 415L513 315"/>
            <path d="M605 338L600 288L613 267L630 397L635 407L656 422L667 413L723 312"/>
            <path d="M815 336L808 287L821 265L842 400L847 408L865 420L873 412L932 310"/>
          </g>
          <g class="axes">
            <path class="ax-b" d="M226 424L220 388"/><path class="ax-bh" d="M220 378L216 392L224 392z"/>
            <path class="ax-g" d="M226 424L235 406"/>
            <path class="ax-r" d="M226 423L262 423"/><path class="ax-rh" d="M273 423L260 418L260 428z"/>
            <text class="lb-z" x="207" y="382">Z</text>
            <text class="lb-y" x="243" y="411">Y</text>
            <text class="lb-x" x="266" y="419">X</text>
          </g>
        </svg>
        <div class="panel">
          <div class="phead">钢筋显示控制面板</div>
          <div class="pbody">
            <label class="ck"><span class="cb"></span>水平纵筋</label>
            <label class="ck"><span class="cb"></span>横向钢筋</label>
            <label class="ck"><span class="cb"></span>显示其它图元</label>
            <label class="ck"><span class="cb"></span>显示详细公式</label>
          </div>
        </div>
      </div>

      <div class="snap">
        <div class="tbar">
          <i class="gr"></i>
          <span class="it mr4"><svg class="ic"><use href="#snx"/></svg>交点</span>
          <span class="it box bx1"><svg class="ic"><use href="#snp"/></svg>垂点</span>
          <span class="it box bx2"><svg class="ic"><use href="#snm"/></svg>中点</span>
          <span class="it mr10"><svg class="ic"><use href="#snv"/></svg>顶点</span>
          <span class="it mr5"><svg class="ic"><use href="#sno"/></svg>坐标</span>
          <i class="gr"></i>
          <span class="sel s6">不偏移<b class="ar"></b></span>
          <i class="sp sp2"></i>
          <span class="gl">X=</span>
          <span class="num n1"><span>0</span><span class="spin"></span></span>
          <span class="gl u">mm</span><span class="gl">Y=</span>
          <span class="num n1"><span>0</span><span class="spin"></span></span>
          <span class="gl u">mm</span>
          <span class="cb2"></span><span class="rot">旋转</span>
          <span class="num n2"><span>0.000</span><span class="spin"></span></span>
          <span class="gl deg">°</span>
        </div>
      </div>

      <section class="bottom">
        <div class="griprail"><svg class="gx"><use href="#gx"/></svg></div>
        <div class="gridwrap">
          <div class="gtool">
            <svg class="ic"><use href="#gstart"/></svg>
            <svg class="ic g1"><use href="#gprev"/></svg>
            <svg class="ic g2"><use href="#tri"/></svg>
            <svg class="ic g2"><use href="#triend"/></svg>
            <i class="sp"></i>
            <svg class="ic"><use href="#gup"/></svg>
            <svg class="ic g1"><use href="#bdown"/></svg>
            <i class="sp"></i>
            <span class="it off"><svg class="ic"><use href="#ins"/></svg>插入</span>
            <span class="it off"><svg class="ic"><use href="#rdel"/></svg>删除</span>
            <span class="it off"><svg class="ic"><use href="#scale"/></svg>缩尺配筋</span>
            <span class="it"><svg class="ic"><use href="#info"/></svg>钢筋信息</span>
            <span class="it"><svg class="ic"><use href="#lib"/></svg>钢筋图库</span>
            <span class="it"><svg class="ic"><use href="#oth"/></svg>其他<b class="ar ag2"></b></span>
            <span class="it">关闭</span>
            <i class="sp sp3"></i>
            <span class="sum">单构件钢筋总重(kg)：12.601</span>
          </div>
          <table class="grid">
            <colgroup>
              <col class="k1"><col class="k2"><col class="k3"><col class="k4"><col class="k5"><col class="k6"><col class="k7"><col class="k8"><col class="k9"><col class="k10"><col class="k11"><col class="k12"><col class="k13"><col class="k14"><col class="k15"><col class="k16">
            </colgroup>
            <thead>
              <tr>
                <th></th><th class="hot">筋号</th><th>直径<i>(mm)</i></th><th>级别</th><th>图号</th><th>图形</th><th>计算公式</th><th>公式描述</th><th>长度<i>(mm)</i></th><th>根数</th><th>搭接</th><th>损耗<i>(%)</i></th><th>单重<i>(kg)</i></th><th>总重<i>(kg)</i></th><th>钢筋归类</th><th>搭接</th>
              </tr>
            </thead>
            <tbody>
              <tr class="rw1">
                <td class="rh act">1*</td><td class="name cur">横向钢筋.1</td><td class="d lbar">8</td><td class="ctr">虫</td><td class="d">0</td>
                <td class="shape">
                  <svg class="shp" viewBox="0 0 211 60" width="211" height="60">
                    <path class="sline" d="M80 7V37L98 46H145"/>
                    <text class="rt1" x="66" y="19">筋</text>
                    <text class="rt1" x="68" y="22">钢</text>
                    <text class="rt1" x="69" y="15">长</text>
                    <text class="rt2" transform="rotate(-70 78 11)" x="74" y="11">50</text>
                    <text class="tlen" x="68" y="50" transform="rotate(30 77 46)">111</text>
                    <text class="tlen" x="124" y="59">258</text>
                  </svg>
                </td>
                <td class="d">50+590</td><td>端头+净长</td><td class="d">640</td><td class="d">30</td><td class="d">0</td><td class="d">0</td><td class="d w">0.253</td><td class="d w">7.584</td><td>直筋</td><td>绑扎</td>
              </tr>
              <tr class="rw2">
                <td class="rh">2</td><td class="name">水平纵筋.1</td><td class="d lbar">6</td><td class="ctr">虫</td><td class="d">1</td>
                <td class="shape">
                  <svg class="shp" viewBox="0 0 211 27" width="211" height="27">
                    <path class="sline" d="M26 19H183"/>
                    <text class="tred" x="105" y="15">5650</text>
                  </svg>
                </td>
                <td class="d">5650</td><td>净长</td><td class="d">5650</td><td class="d">4</td><td class="d">0</td><td class="d">0</td><td class="d w">1.254</td><td class="d w">5.017</td><td>直筋</td><td>绑扎</td>
              </tr>
              <tr class="rw3">
                <td class="rh">3</td><td></td><td class="lbar"></td><td></td><td></td><td></td><td></td><td></td><td></td><td></td><td></td><td></td><td></td><td></td><td></td><td></td>
              </tr>
            </tbody>
          </table>
        </div>
      </section>
    </main>
  </div>

  <div class="badge"><span>66</span></div>
  <div class="sogou">
    <svg class="slogo"><use href="#sogou"/></svg>
    <span class="ying">英</span>
    <svg class="ic"><use href="#moon"/></svg>
    <span class="dot">•,</span>
    <svg class="ic"><use href="#kbd"/></svg>
    <svg class="ic"><use href="#user"/></svg>
    <svg class="ic"><use href="#shirt"/></svg>
    <svg class="ic"><use href="#wrench"/></svg>
  </div>
  <div class="cpu">
    <span>69℃</span>
    <span>CPU温度</span>
  </div>
  <div class="ball"><span>2.08<small>G</small></span></div>
  <div class="poi"><div class="poitext"><span>Poi...</span><i></i></div><div class="start">开始</div></div>
</div>
</body>
</html>
```

FILE: styles.css
```css
* { box-sizing: border-box; }
html, body { margin: 0; padding: 0; }
body {
  width: 1365px; height: 681px; overflow: hidden; background: #f0f0f0; color: #1a1a1a;
  font: 12px/16px "Noto Sans CJK SC", "Noto Sans", sans-serif;
}
.sprite { position: absolute; }
i { font-style: normal; }
.app { position: relative; width: 1365px; height: 681px; overflow: hidden; }
.ic { width: 16px; height: 16px; flex: none; display: block; }

/* title + menu */
.titlebar { height: 24px; background: #fff; display: flex; align-items: center; padding-left: 3px; }
.logo { margin-right: 3px; }
.title { white-space: nowrap; flex: 1; font-size: 12.65px; }
.winctl { display: flex; align-items: center; width: 126px; height: 24px; flex: none; }
.winctl span { display: block; }
.wmin { height: 1px; background: #222; width: 10px; margin-left: 5px; margin-right: 36px; }
.wres { height: 10px; border: 1px solid #222; width: 10px; margin-right: 31px; }
.wcls { font-size: 20px; color: #222; }
.menubar { height: 26px; background: #f4f4f4; display: flex; align-items: center; padding-left: 7px; gap: 10px; white-space: nowrap; }
.m3 { margin-left: 3px; }
.m5 { margin-left: 4px; }
.mi { display: flex; align-items: center; }
.mi1 { gap: 2px; margin-left: -1px; }
.mi2 { gap: 2px; margin-left: -3px; }
.ask { background: #f8f8f8; width: 188px; height: 24px; line-height: 24px; padding-left: 29px; color: #0d6f7f; margin-left: -2px; }
.tail { margin-left: -4px; }
.bean { margin-left: 104px; }
.bell { margin-left: -4px; }
.more { font-size: 15px; font-weight: bold; margin: -4px 0 0 32px; flex: none; }
.ar { display: inline-block; flex: none; width: 0; height: 0; border: 3px solid transparent; border-top: 4px solid #222; border-bottom: 0; margin-left: 6px; }
.ag { border-top-color: #999; margin: 0 -2px 0 3px; }
.ag2 { margin-left: 0; }
.a2 { margin-left: 7px; }
.a1 { margin: 0 10px 0 5px; }
.a3 { margin-left: 3px; }
.a4 { margin-left: 5px; }
.a5 { margin-left: 3px; }
.t-right .a4 { margin-left: 3px; }
.ml5 { margin-left: 5px; }

/* toolbars */
.tb { height: 34px; display: flex; align-items: center; padding: 0 0 0 7px; white-space: nowrap; }
.it { display: flex; align-items: center; gap: 3px; margin-right: 8.4px; height: 24px; white-space: nowrap; }
.mr3 { margin-right: 3px; }
.mr4 { margin-right: 4px; }
.mr5 { margin-right: 5px; }
.mr6 { margin-right: 6px; }
.mr10 { margin-right: 10px; }
.off { color: #9d9d9d; }
.sp { width: 1px; height: 20px; background: #c5c5c5; flex: none; margin: 0 5px 0 -1px; }
.sp1 { margin: 0 8px 0 4px; }
.sp2 { margin: 0 0 0 3px; }
.chev { font-weight: bold; font-size: 15px; margin: -6px 8px 0 20px; line-height: 16px; }
.chev2 { margin-left: 14px; margin-right: 8px; }
.sigma { width: 16px; text-align: center; font-weight: bold; font-size: 13px; font-family: "Liberation Serif", serif; }
.box { border: 1px solid #5a9fdc; background: #e6f1fb; padding: 0 2px; }
.b3d { margin-right: 0; padding: 0 1px; }
.orb { margin-right: 4px; }
.pan { margin-left: 12px; }

/* left side */
.work { display: flex; height: 597px; }
.side { width: 170px; flex: none; padding-right: 6px; display: flex; flex-direction: column; }
.sidehead { height: 16px; background: linear-gradient(#1a80e0, #0a62c4); color: #fff; display: flex; align-items: center; font-size: 12.6px; padding-right: 3px; }
.sidehead span:first-child { flex: 1; }
.pin { font-size: 11px; margin-right: 7px; }
.cl { font-size: 13px; }
.sbtn { height: 22px; background: #eeeeee; border: 1px solid #9e9e9e; border-top-color: #fff; text-align: center; line-height: 21px; font-size: 12px; }
.treetools { height: 27px; display: flex; align-items: center; padding-left: 6px; gap: 6px; }
.treepane { height: 488px; border: 1px solid #a8a8a8; background: #fff; margin-left: 1px; display: flex; flex-direction: column; }
.treemain { flex: 1; display: flex; min-height: 0; }
.tree { width: 145px; flex: none; padding-top: 2px; overflow: hidden;
  background: repeating-linear-gradient(#999 0 1px, transparent 1px 2px) 13px 0 / 1px 360px no-repeat; }
.tr { height: 16px; display: flex; align-items: center; white-space: nowrap; font-size: 12px; flex: none; }
.tr i { font: 10px/16px "Liberation Mono", monospace; }
.ch { padding-left: 44px;
  background:
    repeating-linear-gradient(#999 0 1px, transparent 1px 2px) 33px 0 / 1px 16px no-repeat,
    repeating-linear-gradient(90deg, #999 0 1px, transparent 1px 2px) 33px 8px / 11px 1px no-repeat; }
.ch svg { margin-right: 3px; }
.fd { padding-left: 8px; background: repeating-linear-gradient(90deg, #999 0 1px, transparent 1px 2px) 14px 8px / 10px 1px no-repeat; }
.exp { width: 16px; height: 16px; flex: none; }
.exp::after { content: ""; display: block; width: 6px; height: 6px; border: solid #444; border-width: 0 2px 2px 0; transform: rotate(45deg); margin: 3px 0 0 2px; }
.exp.rt::after { border-color: #aaa; transform: rotate(-45deg); margin: 5px 0 0 0; }
.fo { width: 18px; height: 14px; margin-right: 2px; flex: none; }
.chosen { background: linear-gradient(#ddd, #ddd) 42px 0 / 84px 16px no-repeat,
    repeating-linear-gradient(#999 0 1px, transparent 1px 2px) 33px 0 / 1px 16px no-repeat; }
.ch svg.cols { margin: 0 0 0 1px; }
.vscroll { width: 15px; flex: none; background: #f0f0f0; display: flex; flex-direction: column; }
.up, .dn { height: 16px; flex: none; }
.up::after, .dn::after, .lf::after, .rg::after { content: ""; width: 6px; height: 6px; border: solid #444; border-width: 2px 0 0 2px; display: block; margin: 6px auto 0; transform: rotate(45deg); }
.dn::after { transform: rotate(225deg); margin-top: 2px; }
.thumb { margin-top: 206px; height: 223px; background: #cdcdcd; flex: none; }
.hscroll { height: 15px; background: #f0f0f0; display: flex; flex: none; }
.lf, .rg { width: 18px; flex: none; }
.lf::after { transform: rotate(-45deg); margin: 5px 0 0 8px; }
.rg::after { transform: rotate(135deg); margin: 5px 0 0 2px; }
.hthumb { width: 102px; background: #cdcdcd; margin-right: 9px; }
.last { height: 19px; line-height: 18px; margin-top: 3px; }

/* main */
.main { flex: 1; min-width: 0; display: flex; flex-direction: column; }
.row { display: flex; align-items: center; flex: none; }
.r2 { height: 26px; }
.r3 { height: 28px; }
.r4 { height: 30px; }
.tbar { display: flex; align-items: center; background: #f8f8f8; height: 24px; padding-right: 3px; white-space: nowrap; }
.gr { width: 2px; height: 20px; flex: none; margin: 0 5px; background: repeating-linear-gradient(#aaa 0 2px, transparent 2px 4px); }
.t-right { margin-left: 66px; }
.sel { display: flex; align-items: center; height: 22px; background: #fff; justify-content: space-between; padding-right: 3px; }
.s1 { width: 55px; margin-right: 4px; }
.s2 { width: 68px; margin-right: 4px; }
.s3 { width: 68px; margin-right: 4px; }
.s4 { width: 70px; margin-right: 4px; }
.s5 { width: 55px; justify-content: flex-end; margin: 0 6px 0 -5px; }
.s6 { width: 57px; }
.ebx { margin-left: -4px; margin-right: 5px; }
.canvas { position: relative; height: 304px; background: #000; flex: none; overflow: hidden; }
.scene { display: block; }
.wire path { stroke: #fff; stroke-width: 2; fill: none; }
.gridc circle { stroke: #7c7c7c; stroke-width: 1; fill: none; }
.long path { stroke: #a09a8e; stroke-width: 3; fill: none; }
.hoop path { stroke: #8c8678; stroke-width: 6; fill: none; stroke-linejoin: round; }
.ax-b { stroke: #1482f0; stroke-width: 3; }
.ax-bh { fill: #1482f0; }
.ax-g { stroke: #20e040; stroke-width: 3; }
.ax-r { stroke: #e01010; stroke-width: 5; }
.ax-rh { fill: #e01010; }
.axes text { font: 10px "Liberation Sans", sans-serif; }
.lb-z { fill: #1482f0; }
.lb-y { fill: #20c040; }
.lb-x { fill: #e03030; }
.panel { position: absolute; left: 10px; top: 2px; width: 166px; height: 178px; background: #f6f6f6; border: 1px solid #aaa; border-width: 0 1px 2px 1px; display: flex; flex-direction: column; }
.phead { height: 31px; padding-left: 7px; color: #9a9a9a; line-height: 29px; background: #fbfbfb; }
.pbody { flex: 1; background: #fff; border: 1px solid #999; padding: 2px 3px; }
.ck { display: flex; align-items: center; height: 12px; line-height: 12px; color: #222; }
.cb { width: 11px; height: 11px; border: 1px solid #888; margin-right: 4px; flex: none; position: relative; }
.cb::after { content: ""; position: absolute; left: 2px; top: 0; width: 4px; height: 7px; border: solid #444; border-width: 0 1.500px 1.500px 0; transform: rotate(40deg); }

/* snap bar */
.snap { height: 31px; flex: none; display: flex; padding: 3px 0 0 211px; }
.bx1, .bx2 { margin-right: 0; padding: 0 2px 0 3px; }
.bx2 { border-left: 0; margin-right: 4px; gap: 4px; }
.gl { color: #999; width: 18px; flex: none; }
.u { margin: 0 2px; color: #555; width: 22px; }
.deg { color: #333; margin-left: 3px; width: auto; }
.num { display: flex; align-items: center; justify-content: flex-end; height: 22px; background: #f0f0f0; border: 1px solid #888; margin-left: 3px; color: #777; font-family: "Liberation Sans", sans-serif; font-size: 12px; flex: none; }
.n1 { width: 56px; }
.n2 { width: 66px; margin-left: 6px; }
.spin { width: 10px; height: 18px; margin: 0 2px 0 3px; border-left: 1px solid #ddd;
  background: linear-gradient(135deg, transparent 50%, #555 50%) 2px 3px / 4px 4px no-repeat, linear-gradient(45deg, #555 50%, transparent 50%) 2px 11px / 4px 4px no-repeat; }
.cb2 { width: 11px; height: 11px; border: 1px solid #777; background: #fff; margin: 0 8px 0 7px; flex: none; }
.rot { color: #333; }

/* lower grid */
.bottom { flex: 1; display: flex; min-height: 0; }
.griprail { width: 12px; flex: none; padding-top: 4px; background: radial-gradient(circle, #c4c4c4 1px, transparent 1px) 0 0 / 4px 4px; }
.gx { width: 12px; height: 12px; display: block; }
.gridwrap { flex: 1; min-width: 0; background: #fff; display: flex; flex-direction: column; overflow: hidden; }
.gtool { height: 31px; flex: none; display: flex; align-items: center; background: linear-gradient(#f0f0f0 0 4px, #fff 4px, #eee); white-space: nowrap; }
.gtool > .ic:first-child { margin-left: 6px; }
.g1 { margin-left: 7px; }
.g2 { margin-left: 8px; }
.gtool .sp { margin: 0 4px 0 6px; }
.gtool .sp3 { margin: 0 5px 0 -1px; }
.sum { margin-left: 1px; }
.grid { table-layout: fixed; width: 1183px; border-collapse: collapse; flex: none; font-size: 12px; }
.k1 { width: 34px; } .k2 { width: 73px; } .k3 { width: 57px; } .k4 { width: 35px; } .k5 { width: 33px; } .k6 { width: 211px; }
.k7 { width: 166px; } .k8 { width: 156px; } .k9 { width: 61px; } .k10 { width: 38px; } .k11 { width: 39px; } .k12 { width: 49px; }
.k13 { width: 61px; } .k14 { width: 61px; } .k15 { width: 71px; } .k16 { width: 38px; }
.grid th, .grid td { border: 1px solid #b8b8b8; padding: 0 0 0 2px; white-space: nowrap; overflow: hidden; }
.grid th { height: 18px; font-weight: normal; background: linear-gradient(#fff, #e8e8e8); border-top-color: #aaa; text-align: center; padding: 0; }
.grid th i { font: 10px/16px "Liberation Mono", monospace; }
.grid th.hot { background: linear-gradient(#fbe3ba, #f2b868); color: #7a1d1d; }
.rw1 td, .rw2 td { background: #ccfdd2; }
.rw1 { height: 60px; }
.rw2 { height: 27px; }
.rw3 { height: 20px; }
.rw3 td { background: #fff; }
.grid td.rh { background: #fff; text-align: center; padding: 0; font-family: "Liberation Mono", monospace; font-size: 11px; }
.grid td.act { background: #ffcc80; color: #8a1010; }
.grid td.cur { background: #b2ebdc; }
.grid td.d { font: 10px/16px "Liberation Sans", sans-serif; }
.grid td.w { letter-spacing: .3px; }
.grid td.ctr { text-align: center; padding: 0; font-size: 11px; }
.grid td.lbar { border-left: 1px solid #000; }
.grid td.shape { padding: 0; }
.shp { display: block; }
.sline { stroke: #000; stroke-width: 2; fill: none; }
.rt1 { font-size: 12px; }
.rt2 { font: 9px "Liberation Sans", sans-serif; }
.tlen { font: 10px "Liberation Sans", sans-serif; fill: #333; }
.tred { font: 11px "Liberation Sans", sans-serif; fill: #b01010; text-anchor: middle; }

/* overlays */
.badge { position: absolute; left: 819px; top: -28px; width: 46px; height: 46px; border-radius: 50%; background: #3fb14c; border: 2px solid #c9c9c9; color: #fff; font: 600 11px/1 "Noto Sans", sans-serif; display: flex; justify-content: center; align-items: flex-end; padding-bottom: 5px; }
.sogou { position: absolute; left: 1047px; top: 3px; width: 183px; height: 21px; background: #f4f4f4; border: 1px solid #c8c8c8; border-left: 0; display: flex; align-items: center; gap: 4px; padding-left: 33px; }
.sogou .ic { width: 15px; height: 15px; margin-right: 3px; }
.slogo { width: 26px; height: 28px; position: absolute; left: 0; top: -3px; }
.ying { color: #1c6fd0; font-weight: bold; font-size: 14px; margin-right: 3px; }
.dot { color: #1c6fd0; font-weight: bold; margin-right: 3px; }
.ball { position: absolute; left: 1140px; top: 22px; width: 53px; height: 53px; border-radius: 50%; background: radial-gradient(circle at 50% 40%, #2a86d8, #1461ac); border: 3px solid #f0f0f0; box-shadow: 0 0 3px #555; color: #fff; font-size: 14px; display: flex; justify-content: center; align-items: center; font-family: "Noto Sans", sans-serif; }
.ball small { font-size: 9px; }
.cpu { position: absolute; left: 1172px; top: 28px; width: 81px; height: 40px; background: #e2e2e2; border-radius: 8px; box-shadow: 0 1px 3px #999; display: flex; flex-direction: column; align-items: center; padding-left: 16px; font-size: 11px; color: #333; line-height: 16px; justify-content: center; }
.poi { position: absolute; left: 1311px; top: 60px; width: 54px; display: flex; flex-direction: column; }
.poitext { height: 25px; background: #fff; display: flex; align-items: center; padding-left: 3px; color: #aaa; font-size: 11px; justify-content: space-between; padding-right: 3px; }
.poitext i { width: 16px; height: 17px; background: #ececec; }
.start { width: 52px; height: 23px; border: 2px solid #888; border-top-width: 1px; border-left-width: 1px; background: #f4f4f4; text-align: center; line-height: 21px; box-shadow: 1px 2px 3px #aaa; }
```
